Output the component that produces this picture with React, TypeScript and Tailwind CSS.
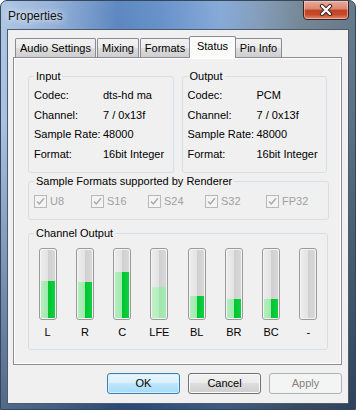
import React from 'react';

const tabs = [
  { label: 'Audio Settings', w: 'w-[81px]', gap: '' },
  { label: 'Mixing', w: 'w-[42px]', gap: 'ml-px' },
  { label: 'Formats', w: 'w-[50px]', gap: 'ml-px' },
  { label: 'Status', w: 'w-[47px]', gap: '-ml-px', active: true },
  { label: 'Pin Info', w: 'w-[47px]', gap: '-ml-px' },
];

const info = {
  Input: [
    ['Codec:', 'dts-hd ma'],
    ['Channel:', '7 / 0x13f'],
    ['Sample Rate:', '48000'],
    ['Format:', '16bit Integer'],
  ],
  Output: [
    ['Codec:', 'PCM'],
    ['Channel:', '7 / 0x13f'],
    ['Sample Rate:', '48000'],
    ['Format:', '16bit Integer'],
  ],
};

const formats = [
  { label: 'U8', w: 'w-[57px]' },
  { label: 'S16', w: 'w-[57px]' },
  { label: 'S24', w: 'w-[57px]' },
  { label: 'S32', w: 'w-[61px]' },
  { label: 'FP32', w: 'w-[57px]' },
];

const channels = [
  { label: 'L', level: 37 },
  { label: 'R', level: 36 },
  { label: 'C', level: 46 },
  { label: 'LFE', level: 31, pale: true },
  { label: 'BL', level: 22 },
  { label: 'BR', level: 19 },
  { label: 'BC', level: 19 },
  { label: '-', level: 0 },
];

function GroupBox({
  title,
  className,
  legendClass,
  children,
}: {
  title: string;
  className?: string;
  legendClass?: string;
  children: React.ReactNode;
}) {
  return (
    <fieldset className={`border border-[#d5dfe5] rounded-[3px] ${className ?? 'px-[5px]'}`}>
      <legend className={`px-[2px] leading-[15px] text-black ${legendClass ?? ''}`}>{title}</legend>
      {children}
    </fieldset>
  );
}

function InfoBox({ title, rows }: { title: string; rows: string[][] }) {
  return (
    <GroupBox title={title} className="w-[147px] h-[104px] px-[5px] pb-[9px]">
      <div className="flex flex-col pt-[2px]">
        {rows.map(([k, v]) => (
          <div key={k} className="flex h-[19.4px] items-center whitespace-nowrap">
            <span className="w-[69px] shrink-0">{k}</span>
            <span>{v}</span>
          </div>
        ))}
      </div>
    </GroupBox>
  );
}

function CheckBox({ label, w }: { label: string; w: string }) {
  return (
    <div className={`flex items-center gap-[3px] ${w}`}>
      <div className="w-[13px] h-[13px] border border-[#b8b8b8] bg-[#f4f4f4] flex items-center justify-center">
        <svg width="11" height="11" viewBox="0 0 11 11">
          <path d="M2 5.5 L4.3 8 L9 2.2" fill="none" stroke="#a8a8a8" strokeWidth="1.4" />
        </svg>
      </div>
      <span className="text-[#a0a0a0]">{label}</span>
    </div>
  );
}

function Bar({ level, pale }: { level: number; pale?: boolean }) {
  const fill = pale
    ? 'bg-[linear-gradient(90deg,#c0f2c8_0%,#b4eebe_52%,#9fe6ad_52%,#a8eab4_100%)]'
    : 'bg-[linear-gradient(90deg,#b2efbc_0%,#a0e8ac_52%,#00c431_52%,#0fd03e_100%)]';
  return (
    <div className="w-[18px] h-[72px] rounded-[3px] border border-[#9a9a9a] p-px bg-[#f4f4f4] flex">
      <div className="flex-1 rounded-[2px] flex flex-col justify-end bg-[linear-gradient(90deg,#ececec_0%,#e2e2e2_52%,#d0d0d0_52%,#d8d8d8_100%)]">
        <div className={fill} style={{ height: `${level}px` }} />
      </div>
    </div>
  );
}

function Button({ children, kind }: { children: React.ReactNode; kind: 'focus' | 'normal' | 'disabled' }) {
  const styles = {
    focus:
      'border-[#3c7fb1] text-black bg-[linear-gradient(180deg,#eaf6fd_0%,#d9f0fc_50%,#bee6fd_50%,#a7d9f5_100%)] shadow-[inset_0_0_0_1px_#d8eefb]',
    normal:
      'border-[#707070] text-black bg-[linear-gradient(180deg,#f2f2f2_0%,#ebebeb_50%,#dddddd_50%,#cfcfcf_100%)] shadow-[inset_0_0_0_1px_#fbfbfb]',
    disabled: 'border-[#adb2b5] text-[#838383] bg-[#f4f4f4]',
  }[kind];
  return (
    <div className={`w-[73px] h-[21px] rounded-[3px] border flex items-center justify-center ${styles}`}>
      {children}
    </div>
  );
}

export default function App() {
  return (
    <div className="w-[356px] h-[410px] overflow-hidden rounded-t-[7px] border border-[#36475a] flex flex-col font-['Liberation_Sans',Arial,sans-serif] text-[11px] text-black bg-[linear-gradient(180deg,rgba(255,255,255,0.08)_0%,rgba(0,0,0,0)_30%,rgba(10,30,60,0.55)_100%),linear-gradient(90deg,#a9c3e3_0%,#8eacd6_15%,#517fbc_33%,#5d8ac6_45%,#7ea4d5_62%,#7c98b8_72%,#6b7f8e_85%,#5b7082_100%)]">
      {/* title bar */}
      <div className="h-[28px] shrink-0 flex items-start justify-between pl-[7px] pr-[6px]">
        <span className="mt-[6px] text-[12px] text-[#111] [text-shadow:0_0_6px_rgba(255,255,255,0.9),0_0_10px_rgba(255,255,255,0.6)]">
          Properties
        </span>
        <div className="-mt-px w-[46px] h-[20px] rounded-b-[4px] border border-[#3e2020] flex items-center justify-center bg-[linear-gradient(180deg,#e9a99a_0%,#d98770_45%,#c24222_50%,#c64a2a_75%,#e08a70_100%)] shadow-[inset_0_0_0_1px_rgba(255,220,210,0.5)]">
          <svg width="14" height="12" viewBox="0 0 14 12">
            <path d="M3 2 L11 10 M11 2 L3 10" stroke="#3a2a2a" strokeWidth="4.2" strokeLinecap="round" />
            <path d="M3 2 L11 10 M11 2 L3 10" stroke="#ffffff" strokeWidth="2.2" strokeLinecap="round" />
          </svg>
        </div>
      </div>

      {/* client area */}
      <div className="mx-[6px] mb-[6px] flex-1 border border-[#4d5b6a] bg-[#f0f0f0] pl-[5px] pr-[6px] pt-[6px] pb-[9px] flex flex-col">
        <div className="flex items-end h-[21px] pl-[2px] relative z-10">
          {tabs.map((t) =>
            t.active ? (
              <div
                key={t.label}
                className={`${t.w} ${t.gap} h-[22px] -mb-px border border-b-0 border-[#898c95] rounded-t-[2px] bg-[#fbfbfb] flex items-center justify-center pb-[2px] relative z-10`}
              >
                {t.label}
              </div>
            ) : (
              <div
                key={t.label}
                className={`${t.w} ${t.gap} h-[19px] border border-b-0 border-[#898c95] rounded-t-[2px] bg-[linear-gradient(180deg,#f2f2f2_0%,#ebebeb_50%,#dddddd_50%,#cfcfcf_100%)] flex items-center justify-center`}
              >
                {t.label}
              </div>
            )
          )}
        </div>

        <div className="h-[308px] border border-[#898c95] bg-[#f0f0f0] shadow-[inset_0_0_0_1px_#ffffff] px-[14px] pt-[11px] flex flex-col">
          <div className="flex gap-[8px]">
            <InfoBox title="Input" rows={info.Input} />
            <InfoBox title="Output" rows={info.Output} />
          </div>

          <GroupBox title="Sample Formats supported by Renderer" className="w-[300px] h-[46px] mt-px px-[5px]">
            <div className="flex pt-[4px]">
              {formats.map((f) => (
                <CheckBox key={f.label} label={f.label} w={f.w} />
              ))}
            </div>
          </GroupBox>

          <GroupBox title="Channel Output" className="w-[300px] h-[124px] mt-[6px] px-0" legendClass="ml-[5px]">
            <div className="grid grid-cols-8 pt-[7px]">
              {channels.map((c) => (
                <div key={c.label} className="flex flex-col items-center">
                  <Bar level={c.level} pale={c.pale} />
                  <span className="mt-[5px] leading-[15px]">{c.label}</span>
                </div>
              ))}
            </div>
          </GroupBox>
        </div>

        <div className="flex justify-end gap-[8px] mt-[8px]">
          <Button kind="focus">OK</Button>
          <Button kind="normal">Cancel</Button>
          <Button kind="disabled">Apply</Button>
        </div>
      </div>
    </div>
  );
}
